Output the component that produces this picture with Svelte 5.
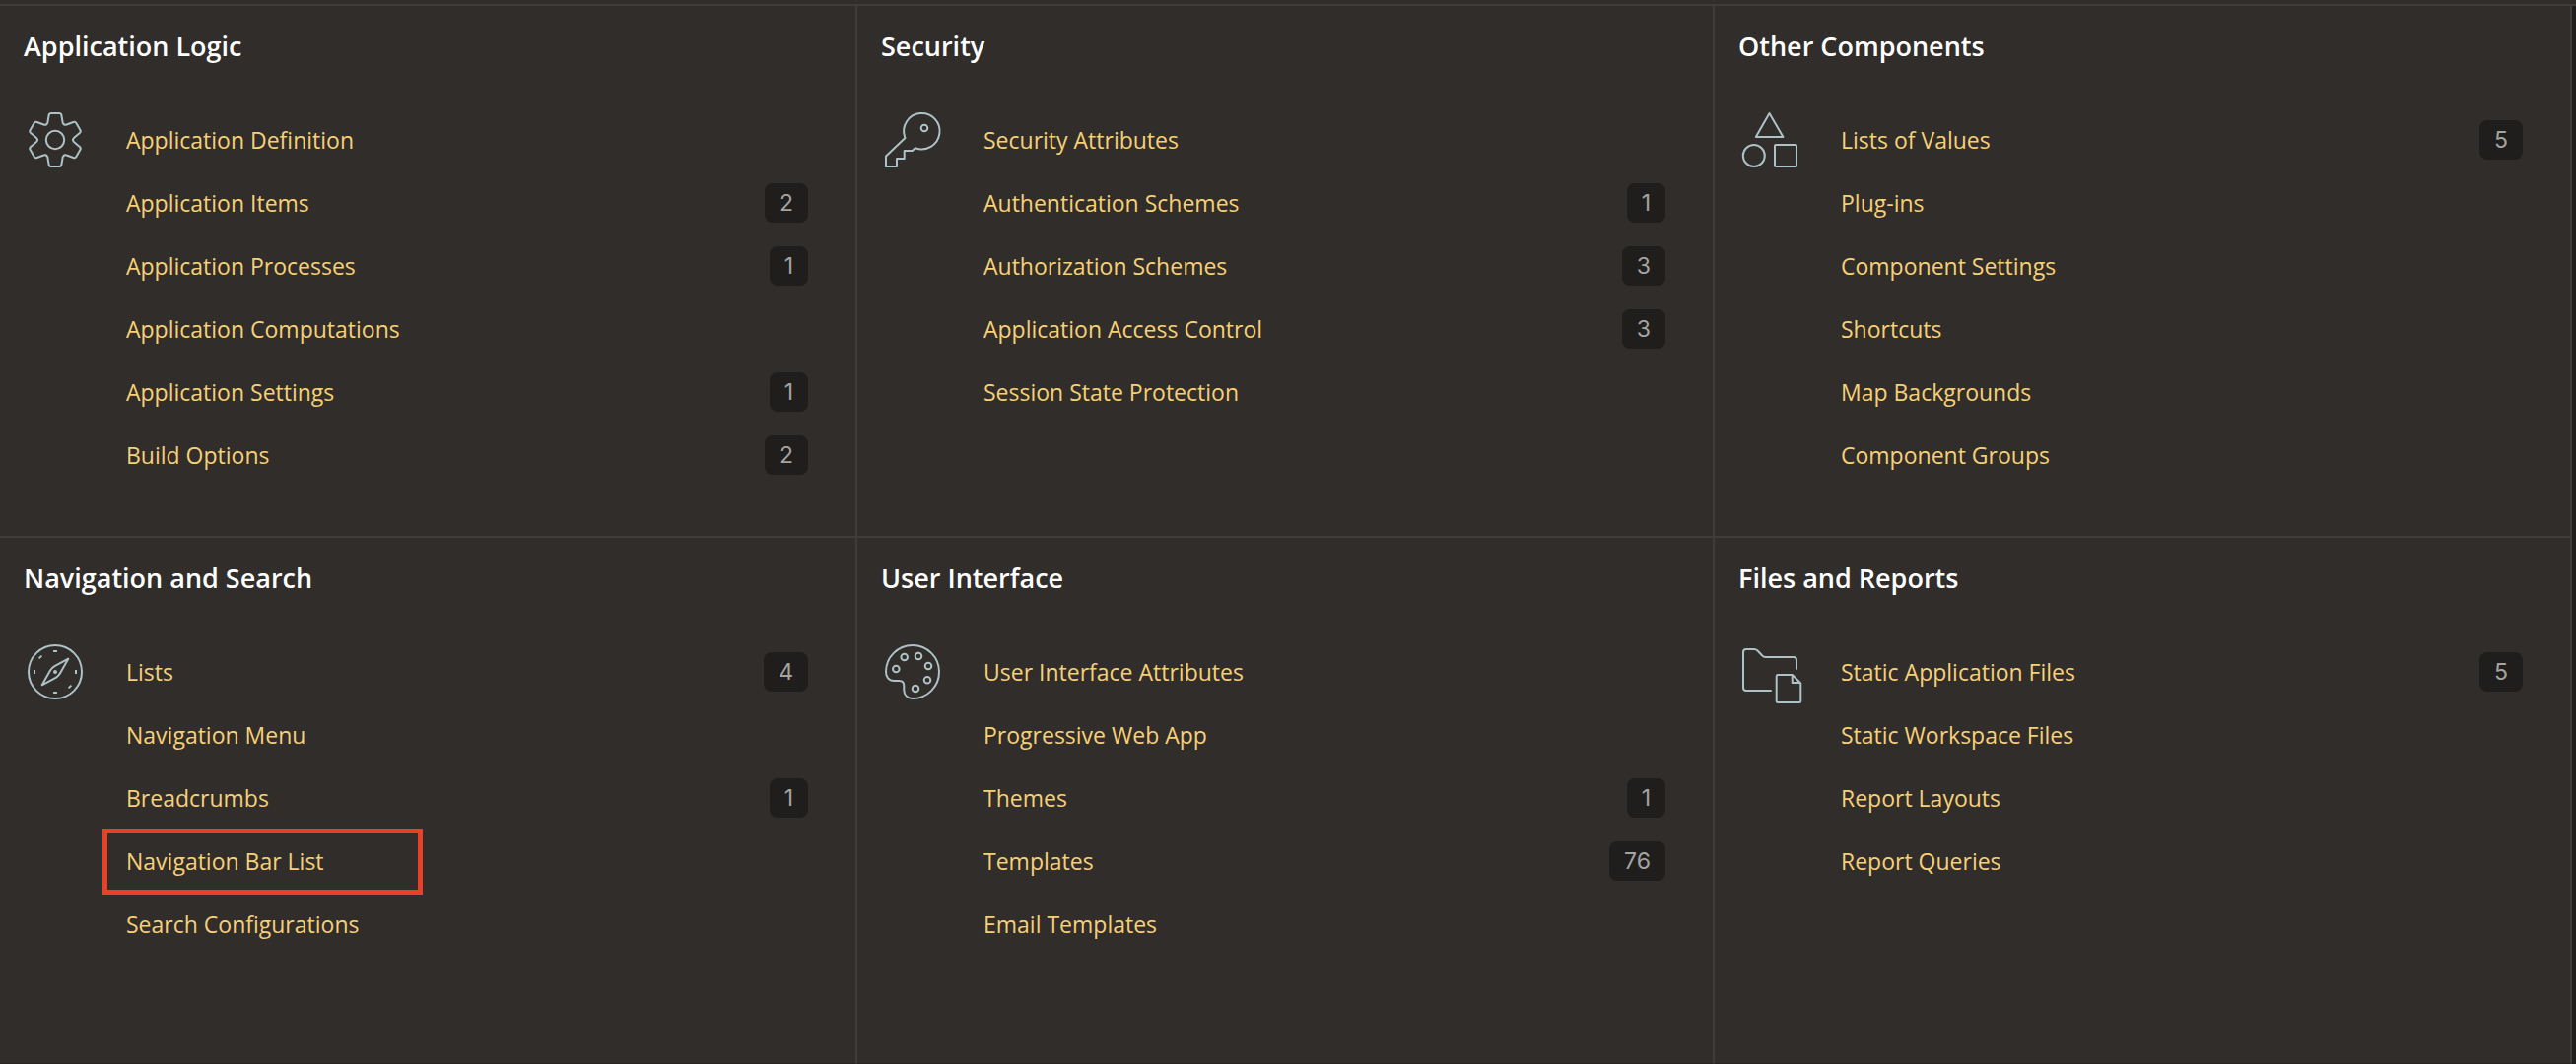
<script>
  const sections = [
    {
      title: 'Application Logic',
      icon: 'gear',
      items: [
        { label: 'Application Definition' },
        { label: 'Application Items', count: 2 },
        { label: 'Application Processes', count: 1 },
        { label: 'Application Computations' },
        { label: 'Application Settings', count: 1 },
        { label: 'Build Options', count: 2 }
      ]
    },
    {
      title: 'Security',
      icon: 'key',
      items: [
        { label: 'Security Attributes' },
        { label: 'Authentication Schemes', count: 1 },
        { label: 'Authorization Schemes', count: 3 },
        { label: 'Application Access Control', count: 3 },
        { label: 'Session State Protection' }
      ]
    },
    {
      title: 'Other Components',
      icon: 'shapes',
      items: [
        { label: 'Lists of Values', count: 5 },
        { label: 'Plug-ins' },
        { label: 'Component Settings' },
        { label: 'Shortcuts' },
        { label: 'Map Backgrounds' },
        { label: 'Component Groups' }
      ]
    },
    {
      title: 'Navigation and Search',
      icon: 'compass',
      items: [
        { label: 'Lists', count: 4 },
        { label: 'Navigation Menu' },
        { label: 'Breadcrumbs', count: 1 },
        { label: 'Navigation Bar List', marked: true },
        { label: 'Search Configurations' }
      ]
    },
    {
      title: 'User Interface',
      icon: 'palette',
      items: [
        { label: 'User Interface Attributes' },
        { label: 'Progressive Web App' },
        { label: 'Themes', count: 1 },
        { label: 'Templates', count: 76 },
        { label: 'Email Templates' }
      ]
    },
    {
      title: 'Files and Reports',
      icon: 'files',
      items: [
        { label: 'Static Application Files', count: 5 },
        { label: 'Static Workspace Files' },
        { label: 'Report Layouts' },
        { label: 'Report Queries' }
      ]
    }
  ];

  const teeth = [0, 60, 120, 180, 240, 300];
  const paints = [[15.3, 29], [23.7, 17], [38, 16], [48, 26], [47, 40.3], [35, 49]];
</script>

<main class="page">
  <div class="grid">
    {#each sections as section}
      <section class="card">
        <h2>{section.title}</h2>
        <div class="body">
          <svg class="icon" viewBox="0 0 64 64" aria-hidden="true">
            {#if section.icon === 'gear'}
              {#each teeth as angle}
                <path
                  d="M23 16.4C24 15.8 24.2 15.2 24.4 14.2L25.6 7Q26 5 28 5H36Q38 5 38.4 7L39.6 14.2C39.8 15.2 40 15.8 41 16.4"
                  transform="rotate({angle} 32 32)"
                />
              {/each}
              <circle cx="32" cy="32" r="9.2" />
            {:else if section.icon === 'key'}
              <path d="M24.5 30L5 48.5V59H16V51H23.7V43H31.7L34.8 40.2A18.2 18.2 0 1 0 24.1 29Z" />
              <circle cx="44" cy="20" r="3.3" />
            {:else if section.icon === 'shapes'}
              <path d="M31.5 5L17.8 29H45.4Z" />
              <circle cx="15.8" cy="48" r="11" />
              <rect x="37" y="37" width="22" height="22" rx="1" />
            {:else if section.icon === 'compass'}
              <circle cx="32" cy="32" r="27" />
              <path class="flat" d="M30 11H34M30 53H34M11 30V34M53 30V34M15.6 18.4L18.4 15.6M45.6 48.4L48.4 45.6" />
              <path d="M45.3 18.7L31.5 26.2Q28.5 28 27 30.5L18.7 45.3L33 37.6Q35.6 36 37.2 33Z" />
              <circle class="dot" cx="32" cy="32" r="2" />
            {:else if section.icon === 'palette'}
              <path d="M5 32A27 27 0 1 1 32 59C27 59 23.3 55.5 23.3 50.5V46Q23.3 41 18.5 41H13C8 41 5 37 5 32Z" />
              {#each paints as [cx, cy]}
                <circle {cx} {cy} r="3.3" />
              {/each}
            {:else}
              <path d="M33 51H8Q5 51 5 48V12Q5 9 8 9H16Q18 9 19.5 10.5L24 15.3Q25.5 17 27.5 17H56Q59 17 59 20V29" />
              <path d="M40 35H54.7L63.3 43.5V62Q63.3 63 62 63H40Q38.7 63 38.7 62V36.3Q38.7 35 40 35ZM54.7 35V43H63" />
            {/if}
          </svg>
          <ul>
            {#each section.items as item}
              <li class:marked={item.marked}>
                <a href="#top">{item.label}</a>
                {#if item.count}
                  <span class="badge">{item.count}</span>
                {/if}
              </li>
            {/each}
          </ul>
        </div>
      </section>
    {/each}
  </div>
</main>

<style>
  :global(body) {
    background: #312d2a;
  }

  .page {
    box-sizing: border-box;
    display: flex;
    flex-direction: column;
    min-height: 100vh;
    padding-top: 4px;
    font-family: 'Open Sans', 'Noto Sans', sans-serif;
  }

  .grid {
    flex: 1;
    display: grid;
    grid-template-columns: repeat(3, 1fr);
    grid-template-rows: auto 1fr;
    padding-right: 4px;
    border-top: 2px solid #403c39;
    background: #1f1e1c;
  }

  .card {
    padding: 24px 48px 50px 24px;
    border-right: 2px solid #403c39;
    border-bottom: 2px solid #403c39;
    background: #312d2a;
  }

  .card:nth-child(n + 4) {
    border-bottom: 1px solid #272422;
  }

  h2 {
    margin: 0 0 46px;
    color: #fff;
    font-size: 27px;
    font-weight: 600;
    line-height: 34px;
  }

  .body {
    display: flex;
    gap: 40px;
  }

  .icon {
    flex: none;
    width: 64px;
    height: 64px;
    overflow: visible;
    fill: none;
    stroke: #adc2c5;
    stroke-width: 2;
    stroke-linecap: round;
    stroke-linejoin: round;
  }

  .flat {
    stroke-linecap: butt;
  }

  .dot {
    fill: #adc2c5;
    stroke: none;
  }

  ul {
    flex: 1;
    margin: 0;
    padding: 0;
    list-style: none;
  }

  li {
    position: relative;
    display: flex;
    align-items: center;
    justify-content: space-between;
    height: 64px;
  }

  a {
    color: #f6d077;
    font-size: 23px;
    font-weight: 500;
    line-height: 32px;
    text-decoration: none;
  }

  a:hover {
    text-decoration: underline;
  }

  .badge {
    padding: 0 15px;
    border-radius: 8px;
    background: #201e1c;
    color: #a5a3a0;
    font-family: Inter, sans-serif;
    font-size: 23px;
    line-height: 40px;
  }

  .marked::after {
    content: '';
    position: absolute;
    top: -1px;
    bottom: -2px;
    left: -24px;
    box-sizing: border-box;
    width: 325px;
    border: 5px solid #ea4025;
    pointer-events: none;
  }
</style>
